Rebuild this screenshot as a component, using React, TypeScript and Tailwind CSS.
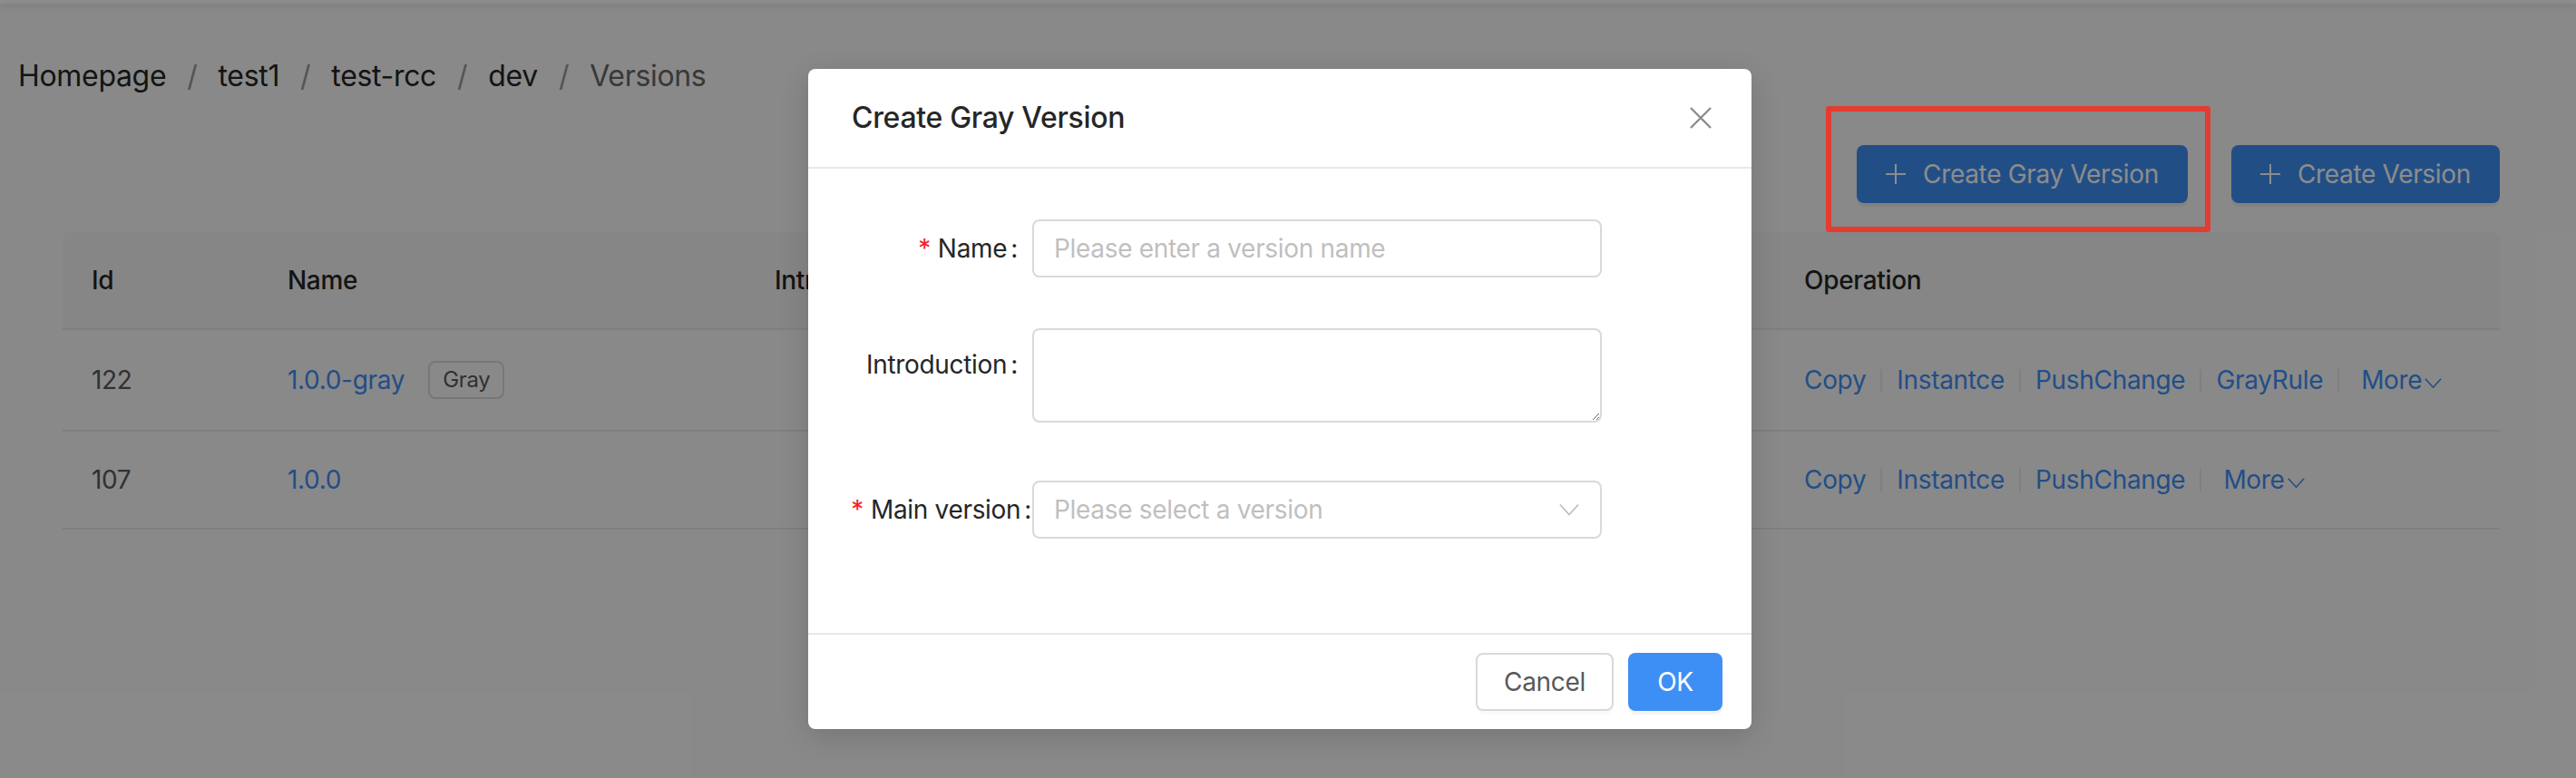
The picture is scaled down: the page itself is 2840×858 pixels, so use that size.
import React from "react";

// Versions page with the "Create Gray Version" modal open

const Plus = () => (
  <svg width="22" height="22" viewBox="0 0 22 22" fill="none" stroke="currentColor" strokeWidth="2">
    <path d="M11 0v22M0 11h22" />
  </svg>
);

const Chevron = ({ className }: { className?: string }) => (
  <svg className={className} viewBox="0 0 24 14" fill="none" stroke="currentColor" strokeWidth="2">
    <path d="M1 1l11 12L23 1" />
  </svg>
);

const Sep = () => <span className="mx-[16px] h-[25px] w-[2px] bg-[#e8e8e8]" />;

const Crumb = ({ text, last }: { text: string; last?: boolean }) => (
  <>
    <span className={last ? "text-[#666]" : "text-[#262626]"}>{text}</span>
    {!last && <span className="mx-[23px] text-[#999]">/</span>}
  </>
);

const Operations = ({ gray }: { gray?: boolean }) => (
  <div className="flex items-center text-[28px] text-[#3e8ff5]">
    <span>Copy</span>
    <Sep />
    <span>Instantce</span>
    <Sep />
    <span>PushChange</span>
    <Sep />
    {gray && (
      <>
        <span>GrayRule</span>
        <Sep />
      </>
    )}
    <span className="ml-[8px] flex items-center">
      More
      <Chevron className="ml-[3px] mt-[6px] h-[11px] w-[19px]" />
    </span>
  </div>
);

const FormLabel = ({ text, required, tight }: { text: string; required?: boolean; tight?: boolean }) => (
  <div className="flex h-[80px] w-[199px] shrink-0 items-center justify-end whitespace-nowrap text-[28px] text-[#262626]">
    {required && <span className="mr-[8px] text-[#f5222d]">*</span>}
    <span>{text}</span>
    <span className={tight ? "ml-[4px] mr-[1px]" : "ml-[4px] mr-[16px]"}>:</span>
  </div>
);

export default function App() {
  return (
    <div
      className="relative h-[858px] w-[2840px] overflow-hidden bg-[#fafafa] tracking-[-0.02em]"
      style={{ fontFamily: 'Inter, "Liberation Sans", Arial, sans-serif' }}
    >
      <div className="h-[4px] bg-white shadow-[0_2px_8px_rgba(0,0,0,0.15)]" />

      <div className="ml-[20px] mt-[56px] flex h-[48px] items-center text-[32px]">
        <Crumb text="Homepage" />
        <Crumb text="test1" />
        <Crumb text="test-rcc" />
        <Crumb text="dev" />
        <Crumb text="Versions" last />
      </div>

      <div className="pl-[69px] pr-[84px]">
        <div className="mt-[52px] flex justify-end gap-[48px]">
          <button className="flex h-[64px] items-center gap-[19px] rounded-[8px] bg-[#3e8ff5] px-[32px] text-[28px] text-white shadow-[0_4px_0_rgba(0,0,0,0.05)]">
            <Plus />
            Create Gray Version
          </button>
          <button className="flex h-[64px] items-center gap-[19px] rounded-[8px] bg-[#3e8ff5] px-[32px] text-[28px] text-white shadow-[0_4px_0_rgba(0,0,0,0.05)]">
            <Plus />
            Create Version
          </button>
        </div>

        <div className="mt-[32px]">
          <div className="flex h-[108px] items-center rounded-t-[8px] border-b-2 border-[#e8e8e8] bg-[#f5f5f5] text-[28px] font-medium text-[#262626]">
            <div className="w-[216px] pl-[32px]">Id</div>
            <div className="w-[537px] pl-[32px]">Name</div>
            <div className="flex-1 pl-[32px]">Introduction</div>
            <div className="w-[799px] pl-[32px]">Operation</div>
          </div>
          <div className="flex h-[112px] items-center border-b-2 border-[#e8e8e8] text-[28px] text-[#595959]">
            <div className="w-[216px] pl-[32px]">122</div>
            <div className="flex w-[537px] items-center pl-[32px]">
              <span className="text-[#3e8ff5]">1.0.0-gray</span>
              <span className="ml-[26px] flex h-[42px] items-center rounded-[8px] border-2 border-[#d9d9d9] bg-[#fafafa] px-[14px] text-[24px] text-[#595959]">
                Gray
              </span>
            </div>
            <div className="flex-1" />
            <div className="w-[799px] pl-[32px]">
              <Operations gray />
            </div>
          </div>
          <div className="flex h-[108px] items-center border-b-2 border-[#e8e8e8] text-[28px] text-[#595959]">
            <div className="w-[216px] pl-[32px]">107</div>
            <div className="w-[537px] pl-[32px] text-[#3e8ff5]">1.0.0</div>
            <div className="flex-1" />
            <div className="w-[799px] pl-[32px]">
              <Operations />
            </div>
          </div>
        </div>
      </div>

      {/* mask */}
      <div className="absolute inset-0 bg-black/45" />

      {/* red highlight drawn over the screenshot */}
      <div className="absolute left-[2013px] top-[117px] h-[139px] w-[424px] rounded-[3px] border-[6px] border-[#e43c30]" />

      {/* modal */}
      <div className="absolute left-[891px] top-[76px] w-[1040px] rounded-[8px] bg-white shadow-[0_8px_32px_rgba(0,0,0,0.15)]">
        <div className="flex h-[110px] items-center justify-between border-b-2 border-[#e8e8e8] pl-[48px] pr-[44px]">
          <span className="text-[32px] font-medium text-[#262626]">Create Gray Version</span>
          <svg width="24" height="24" viewBox="0 0 24 24" fill="none" stroke="#8c8c8c" strokeWidth="2.4">
            <path d="M1 1l22 22M23 1L1 23" />
          </svg>
        </div>

        <div className="p-[48px]">
          <div className="flex h-[80px] items-center">
            <FormLabel text="Name" required />
            <input
              readOnly
              placeholder="Please enter a version name"
              className="h-[64px] w-[628px] rounded-[8px] border-2 border-[#d9d9d9] px-[22px] text-[28px] text-[#262626] outline-none placeholder:text-[#bfbfbf]"
            />
          </div>

          <div className="mt-[48px] flex h-[112px] items-start">
            <FormLabel text="Introduction" />
            <textarea
              readOnly
              className="h-[104px] w-[628px] rounded-[8px] border-2 border-[#d9d9d9] px-[22px] py-[8px] text-[28px] outline-none"
            />
          </div>

          <div className="mt-[48px] mb-[48px] flex h-[80px] items-center">
            <FormLabel text="Main version" required tight />
            <div className="flex h-[64px] w-[628px] items-center justify-between rounded-[8px] border-2 border-[#d9d9d9] pl-[22px] pr-[23px] text-[28px] text-[#bfbfbf]">
              <span>Please select a version</span>
              <Chevron className="h-[14px] w-[22px]" />
            </div>
          </div>
        </div>

        <div className="flex justify-end gap-[16px] border-t-2 border-[#e8e8e8] px-[32px] py-[20px]">
          <button className="h-[64px] w-[152px] rounded-[8px] border-2 border-[#d9d9d9] bg-white text-[28px] text-[#595959] shadow-[0_4px_0_rgba(0,0,0,0.02)]">
            Cancel
          </button>
          <button className="h-[64px] w-[104px] rounded-[8px] bg-[#3e8ff5] text-[28px] text-white shadow-[0_4px_0_rgba(0,0,0,0.045)]">
            OK
          </button>
        </div>
      </div>
    </div>
  );
}
